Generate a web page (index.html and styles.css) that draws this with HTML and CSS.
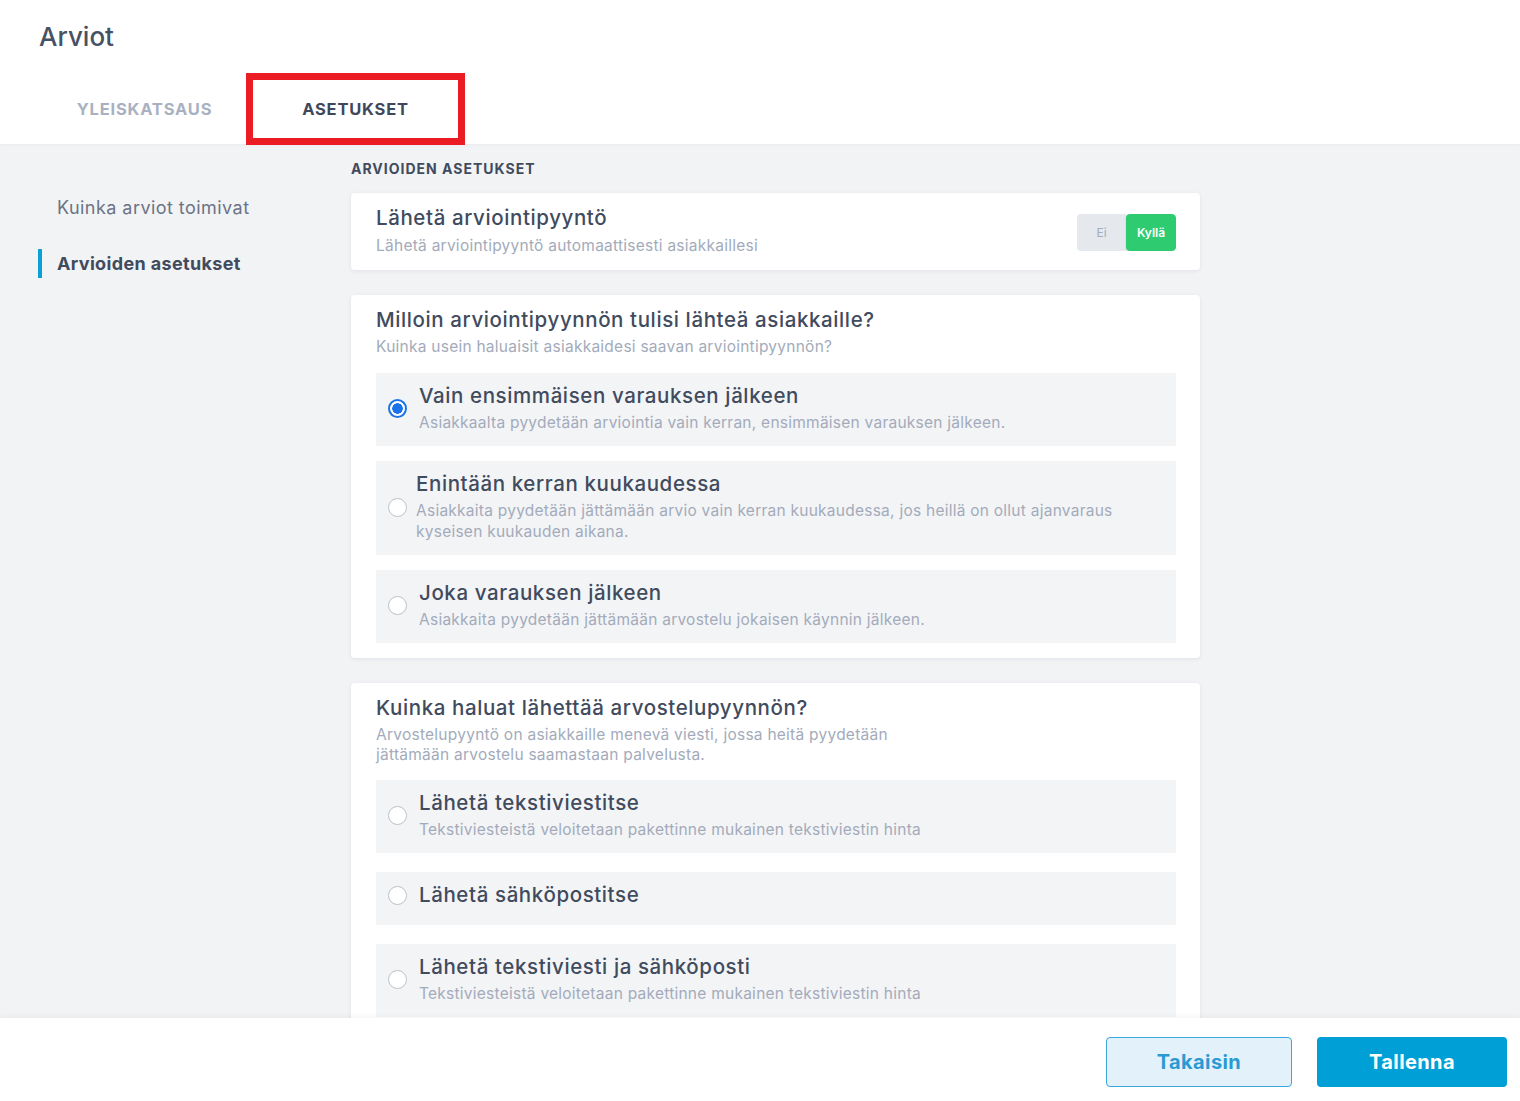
FILE: index.html
```html
<!DOCTYPE html>
<html lang="fi">
<head>
<meta charset="utf-8">
<title>Arviot</title>
<link rel="stylesheet" href="styles.css">
</head>
<body>
<div class="app">
  <header class="header">
    <h1 class="page-title">Arviot</h1>
    <nav class="tabs">
      <div class="tab">YLEISKATSAUS</div>
      <div class="tab tab-active">ASETUKSET</div>
    </nav>
  </header>

  <main class="main">
    <aside class="sidebar">
      <div class="side-item">Kuinka arviot toimivat</div>
      <div class="side-item side-active">Arvioiden asetukset</div>
    </aside>

    <section class="content">
      <div class="section-label">ARVIOIDEN ASETUKSET</div>

      <div class="card card-toggle">
        <div class="card-text">
          <div class="card-title">Lähetä arviointipyyntö</div>
          <div class="card-sub">Lähetä arviointipyyntö automaattisesti asiakkaillesi</div>
        </div>
        <div class="toggle">
          <span class="toggle-off">Ei</span>
          <span class="toggle-on">Kyllä</span>
        </div>
      </div>

      <div class="card card-options">
        <div class="card-title">Milloin arviointipyynnön tulisi lähteä asiakkaille?</div>
        <div class="card-sub">Kuinka usein haluaisit asiakkaidesi saavan arviointipyynnön?</div>
        <div class="options">
          <label class="option">
            <span class="radio radio-checked"></span>
            <span class="option-text">
              <span class="option-title">Vain ensimmäisen varauksen jälkeen</span>
              <span class="option-desc">Asiakkaalta pyydetään arviointia vain kerran, ensimmäisen varauksen jälkeen.</span>
            </span>
          </label>
          <label class="option option-tight">
            <span class="radio"></span>
            <span class="option-text">
              <span class="option-title">Enintään kerran kuukaudessa</span>
              <span class="option-desc">Asiakkaita pyydetään jättämään arvio vain kerran kuukaudessa, jos heillä on ollut ajanvaraus<br>kyseisen kuukauden aikana.</span>
            </span>
          </label>
          <label class="option">
            <span class="radio"></span>
            <span class="option-text">
              <span class="option-title">Joka varauksen jälkeen</span>
              <span class="option-desc">Asiakkaita pyydetään jättämään arvostelu jokaisen käynnin jälkeen.</span>
            </span>
          </label>
        </div>
      </div>

      <div class="card card-options">
        <div class="card-title">Kuinka haluat lähettää arvostelupyynnön?</div>
        <div class="card-sub">Arvostelupyyntö on asiakkaille menevä viesti, jossa heitä pyydetään<br>jättämään arvostelu saamastaan palvelusta.</div>
        <div class="options options-wide">
          <label class="option">
            <span class="radio"></span>
            <span class="option-text">
              <span class="option-title">Lähetä tekstiviestitse</span>
              <span class="option-desc">Tekstiviesteistä veloitetaan pakettinne mukainen tekstiviestin hinta</span>
            </span>
          </label>
          <label class="option option-single">
            <span class="radio"></span>
            <span class="option-text">
              <span class="option-title">Lähetä sähköpostitse</span>
            </span>
          </label>
          <label class="option">
            <span class="radio"></span>
            <span class="option-text">
              <span class="option-title">Lähetä tekstiviesti ja sähköposti</span>
              <span class="option-desc">Tekstiviesteistä veloitetaan pakettinne mukainen tekstiviestin hinta</span>
            </span>
          </label>
        </div>
      </div>
    </section>
  </main>

  <footer class="footer">
    <button class="btn btn-secondary">Takaisin</button>
    <button class="btn btn-primary">Tallenna</button>
  </footer>
</div>
</body>
</html>
```
FILE: styles.css
```css
* { box-sizing: border-box; }

html, body {
  margin: 0;
  height: 100%;
}

body {
  font-family: Inter, "Liberation Sans", sans-serif;
  color: #414b5e;
  background: #f2f3f5;
}

.app {
  height: 100vh;
  display: flex;
  flex-direction: column;
  overflow: hidden;
}

/* Header */
.header {
  background: #ffffff;
  padding: 0 0 0 39px;
  flex: 0 0 144px;
  position: relative;
  z-index: 2;
  box-shadow: 0 1px 3px rgba(0, 0, 0, 0.04);
}

.page-title {
  margin: 0;
  padding-top: 22px;
  height: 73px;
  font-size: 26px;
  line-height: 30px;
  font-weight: 500;
  color: #475166;
}

.tabs {
  display: flex;
  height: 71px;
}

.tab {
  width: 207px;
  display: flex;
  align-items: center;
  justify-content: center;
  padding-left: 4px;
  font-size: 16.5px;
  font-weight: 700;
  color: #a9b1c1;
  letter-spacing: 0.8px;
}

.tab-active {
  width: 219px;
  height: 72px;
  padding-left: 0;
  border: 7px solid #ec1c24;
  color: #3f485b;
}

/* Main */
.main {
  flex: 1;
  display: flex;
  overflow: hidden;
}

.sidebar {
  width: 351px;
  flex: 0 0 351px;
  padding: 54px 0 0 38px;
}

.side-item {
  padding-left: 19px;
  font-size: 18px;
  line-height: 20px;
  letter-spacing: 0.45px;
  color: #6b7385;
}

.side-active {
  margin-top: 31px;
  border-left: 4px solid #0a9fd6;
  padding-left: 15px;
  height: 29px;
  line-height: 29px;
  font-weight: 700;
  letter-spacing: 0.35px;
  color: #414b5e;
}

.content {
  width: 849px;
  flex: 0 0 849px;
  padding-top: 16px;
}

.section-label {
  font-size: 14px;
  line-height: 18px;
  font-weight: 700;
  letter-spacing: 1px;
  color: #414b5e;
  margin-bottom: 15px;
}

.card {
  background: #ffffff;
  border-radius: 4px;
  box-shadow: 0 1px 4px rgba(30, 40, 60, 0.08);
  margin-bottom: 25px;
}

.card-toggle {
  display: flex;
  align-items: center;
  justify-content: space-between;
  padding: 13px 24px 14px 25px;
}

.card-toggle .card-sub {
  margin-top: 6px;
}

.card-title {
  font-size: 20.5px;
  line-height: 24px;
  font-weight: 500;
  letter-spacing: 0.6px;
  color: #414b5e;
}

.card-sub {
  margin-top: 5px;
  font-size: 15.5px;
  line-height: 20px;
  letter-spacing: 0.25px;
  color: #a3abbb;
}

.toggle {
  display: flex;
  height: 37px;
  margin-top: 2px;
  border-radius: 4px;
  overflow: hidden;
  font-size: 12px;
}

.toggle-off {
  width: 49px;
  display: flex;
  align-items: center;
  justify-content: center;
  background: #e5e8ed;
  color: #a4abba;
}

.toggle-on {
  width: 50px;
  display: flex;
  align-items: center;
  justify-content: center;
  background: #2ecb71;
  color: #ffffff;
  font-weight: 600;
  border-radius: 4px;
  box-shadow: 0 1px 2px rgba(0, 0, 0, 0.12);
}

.card-options {
  padding: 13px 24px 15px 25px;
}

.options {
  margin-top: 16px;
  display: flex;
  flex-direction: column;
  gap: 15px;
}

.options-wide {
  margin-top: 15px;
  gap: 19px;
}

.option {
  display: flex;
  align-items: center;
  background: #f3f4f6;
  padding: 11px 12px 13px 12px;
}

.option-single {
  padding-bottom: 18px;
}

.radio {
  flex: 0 0 19px;
  width: 19px;
  height: 19px;
  border-radius: 50%;
  border: 1px solid #bcc1ca;
  background: #ffffff;
  margin-right: 12px;
}

.radio-checked {
  border: 2px solid #1a73e8;
  background: radial-gradient(circle, #1a73e8 0 5px, #ffffff 5.5px);
}

.option-tight .radio {
  margin-right: 9px;
}

.option-text {
  display: flex;
  flex-direction: column;
}

.option-title {
  font-size: 20.5px;
  line-height: 24px;
  font-weight: 500;
  letter-spacing: 0.6px;
  color: #414b5e;
}

.option-desc {
  margin-top: 4px;
  font-size: 15.5px;
  line-height: 21px;
  letter-spacing: 0.25px;
  color: #a3abbb;
}

/* Footer */
.footer {
  flex: 0 0 83px;
  background: #ffffff;
  display: flex;
  justify-content: flex-end;
  align-items: flex-start;
  padding: 19px 13px 0 0;
  gap: 25px;
  position: relative;
  z-index: 2;
  box-shadow: 0 -2px 4px rgba(0, 0, 0, 0.04);
}

.btn {
  height: 50px;
  border-radius: 4px;
  font-family: inherit;
  font-size: 20px;
  font-weight: 700;
  letter-spacing: 0.4px;
  cursor: pointer;
}

.btn-secondary {
  width: 186px;
  background: #e3f1fa;
  border: 1.5px solid #38a8dc;
  color: #2a9ad3;
}

.btn-primary {
  width: 190px;
  background: #009fd6;
  border: none;
  color: #ffffff;
}
```
